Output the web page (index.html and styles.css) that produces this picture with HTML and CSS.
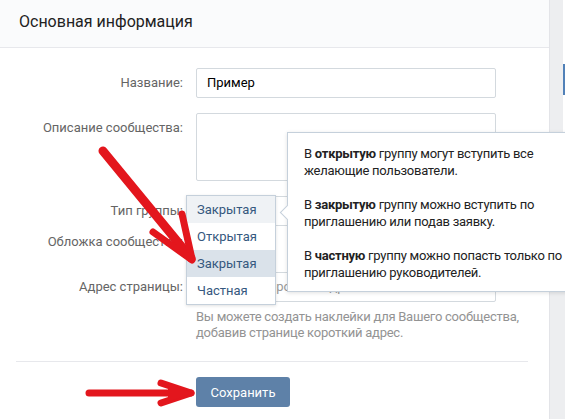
FILE: index.html
```html
<!DOCTYPE html>
<html lang="ru">
<head>
    <meta charset="UTF-8">
    <title>Основная информация</title>
    <link rel="stylesheet" href="styles.css">
</head>
<body>

<div class="page">
    <div class="card">
        <div class="card-header">Основная информация</div>

        <div class="form">
            <div class="row">
                <div class="label">Название:</div>
                <div class="field"><div class="input">Пример</div></div>
            </div>

            <div class="row">
                <div class="label">Описание сообщества:</div>
                <div class="field"><div class="textarea"></div></div>
            </div>

            <div class="row">
                <div class="label">Тип группы:</div>
                <div class="field"><div class="input">Закрытая</div></div>
            </div>

            <div class="row row-cover">
                <div class="label label-plain">Обложка сообщества:</div>
                <div class="field"></div>
            </div>

            <div class="row row-address">
                <div class="label">Адрес страницы:</div>
                <div class="field">
                    <div class="input input-muted">Укажите короткий адрес</div>
                    <div class="hint">Вы можете создать наклейки для Вашего сообщества, добавив странице короткий адрес.</div>
                </div>
            </div>
        </div>

        <div class="divider"></div>

        <div class="actions">
            <button class="btn">Сохранить</button>
        </div>
    </div>

    <div class="side">
        <div class="side-menu"><span class="side-mark"></span></div>
    </div>
</div>

<!-- выпадающий список -->
<div class="dropdown">
    <div class="dd-item dd-current">Закрытая</div>
    <div class="dd-item">Открытая</div>
    <div class="dd-item dd-selected">Закрытая</div>
    <div class="dd-item">Частная</div>
</div>

<!-- подсказка -->
<div class="tip">
    <p>В <b>открытую</b> группу могут вступить все<br>желающие пользователи.</p>
    <p>В <b>закрытую</b> группу можно вступить по<br>приглашению или подав заявку.</p>
    <p>В <b>частную</b> группу можно попасть только по<br>приглашению руководителей.</p>
</div>

<!-- стрелки поверх скриншота -->
<svg class="arrows" width="565" height="419" viewBox="0 0 565 419">
    <g stroke="#e3161d" stroke-linecap="round" stroke-linejoin="round" fill="none">
        <path d="M103 151 L191 258" stroke-width="9"/>
        <path d="M182 214 L192 259" stroke-width="7"/>
        <path d="M153 232 L192 260" stroke-width="7"/>
        <path d="M89 393 L188 393" stroke-width="7"/>
        <path d="M161 383 L191 393" stroke-width="7"/>
        <path d="M161 403 L191 393" stroke-width="7"/>
    </g>
    <path d="M168 384 L193 393 L168 402 Z" fill="#e3161d"/>
</svg>

</body>
</html>
```

FILE: styles.css
```css
/* общее */
body {
    margin: 0;
    width: 565px;
    height: 419px;
    overflow: hidden;
    position: relative;
    background: #fff;
    font-family: Roboto, "Liberation Sans", sans-serif;
    font-size: 13px;
    color: #222;
}

.page {
    display: flex;
    height: 419px;
}

/* карточка */
.card {
    width: 549px;
    flex: none;
    background: #fff;
}

.card-header {
    height: 47px;
    line-height: 44px;
    padding-left: 19px;
    font-size: 16px;
    color: #222;
    background: #fafbfc;
    border-bottom: 1px solid #e7e8ec;
}

.form {
    padding-top: 20px;
}

.row {
    display: flex;
    margin-bottom: 15px;
}

.label {
    width: 183px;
    margin-right: 13px;
    text-align: right;
    line-height: 30px;
    color: #656565;
    white-space: nowrap;
}

.field {
    width: 300px;
}

.input {
    height: 28px;
    line-height: 28px;
    padding: 0 10px;
    border: 1px solid #d3d9de;
    border-radius: 2px;
    color: #000;
    white-space: nowrap;
    overflow: hidden;
}

.input-muted {
    color: #999;
}

.textarea {
    height: 66px;
    border: 1px solid #d3d9de;
    border-radius: 2px;
}

.row-cover {
    margin-top: -7px;
    margin-bottom: 22px;
}

.row-cover .label {
    line-height: 16px;
}

.row-address {
    margin-bottom: 0;
}

.hint {
    width: 340px;
    margin-top: 7px;
    line-height: 16px;
    letter-spacing: -0.25px;
    color: #939393;
}

.divider {
    height: 1px;
    margin: 20px 21px 15px 16px;
    background: #e7e8ec;
}

.actions {
    padding-left: 196px;
}

.btn {
    width: 94px;
    height: 30px;
    border: none;
    border-radius: 3px;
    background: #5e81a8;
    color: #fff;
    font-family: inherit;
    font-size: 13px;
}

/* правая колонка */
.side {
    flex: 1;
    background: #edeef0;
    border-left: 1px solid #e3e4e8;
    display: flex;
    justify-content: flex-end;
}

.side-menu {
    width: 2px;
    height: 132px;
    background: #fff;
    position: relative;
}

.side-mark {
    position: absolute;
    left: 0;
    top: 64px;
    width: 2px;
    height: 31px;
    background: #5181b8;
}

/* выпадающий список */
.dropdown {
    position: absolute;
    left: 186px;
    top: 195px;
    width: 88px;
    background: #fff;
    border: 1px solid #c5d0db;
    box-shadow: 0 1px 3px rgba(0, 0, 0, 0.12);
}

.dd-item {
    height: 27px;
    line-height: 27px;
    padding-left: 10px;
    color: #35587e;
}

.dd-current {
    background: #eff2f5;
}

.dd-selected {
    background: #dae2ea;
}

/* подсказка */
.tip {
    position: absolute;
    left: 287px;
    top: 132px;
    width: 300px;
    height: 134px;
    padding: 12px 16px 12px 16px;
    background: #fff;
    border: 1px solid #c5d0db;
    box-shadow: 0 1px 4px rgba(0, 0, 0, 0.12);
    line-height: 17px;
    letter-spacing: -0.25px;
    color: #222;
}

.tip::before {
    content: "";
    position: absolute;
    left: -6px;
    top: 74px;
    width: 10px;
    height: 10px;
    background: #fff;
    border-left: 1px solid #c5d0db;
    border-bottom: 1px solid #c5d0db;
    transform: rotate(45deg);
}

.tip p {
    margin: 0 0 17px;
    white-space: nowrap;
}

.tip p:last-child {
    margin-bottom: 0;
}

.arrows {
    position: absolute;
    left: 0;
    top: 0;
}
```
